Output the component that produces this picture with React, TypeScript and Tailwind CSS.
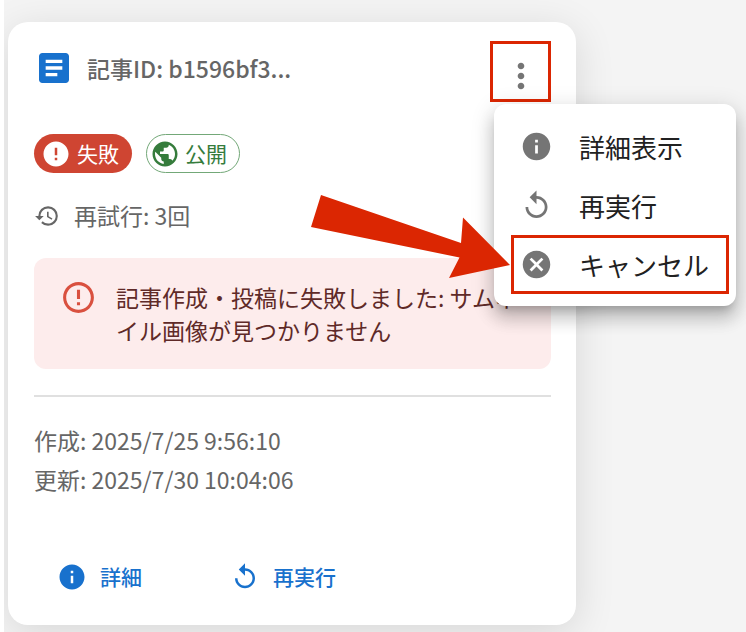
import { useState } from 'react'
import type { ReactNode } from 'react'
import {
  MdArticle,
  MdCancel,
  MdError,
  MdErrorOutline,
  MdHistory,
  MdInfo,
  MdMoreVert,
  MdPublic,
  MdReplay,
} from 'react-icons/md'

const article = {
  id: 'b1596bf3...',
  retries: 3,
  error: '記事作成・投稿に失敗しました: サムネイル画像が見つかりません',
  created: '2025/7/25 9:56:10',
  updated: '2025/7/30 10:04:06',
}

const menuItems = [
  { label: '詳細表示', icon: <MdInfo size={33} />, marked: false },
  { label: '再実行', icon: <MdReplay size={33} />, marked: false },
  { label: 'キャンセル', icon: <MdCancel size={33} />, marked: true },
]

function PointerArrow() {
  return (
    <svg
      className="pointer-events-none absolute right-full -top-[41px] text-[#db2602]"
      width="200"
      height="85"
      viewBox="0 0 200 85"
      fill="currentColor"
      aria-hidden="true"
    >
      <path d="M10 1 150 49 152 23.5 199 71 138 84 148.5 63.5 0 33Z" />
    </svg>
  )
}

function ActionMenu() {
  return (
    <ul
      role="menu"
      className="absolute top-[63px] left-1 z-10 w-[242px] rounded-xl bg-white pt-[13px] pr-[7px] pb-3 pl-[17px] shadow-[0_8px_8px_-5px_rgba(0,0,0,0.2),0_13px_16px_2px_rgba(0,0,0,0.14),0_5px_22px_3px_rgba(0,0,0,0.12)]"
    >
      {menuItems.map(item => (
        <li key={item.label} role="none" className="relative">
          <button
            role="menuitem"
            className={`flex h-[59px] w-full items-center gap-[26px] border-3 pl-[6px] text-[26px] text-[#212121] ${
              item.marked ? 'border-[#db2602]' : 'border-transparent'
            }`}
          >
            <span className="text-[#757575]">{item.icon}</span>
            <span className="whitespace-nowrap">{item.label}</span>
          </button>
          {item.marked && <PointerArrow />}
        </li>
      ))}
    </ul>
  )
}

function CardButton({ icon, children }: { icon: ReactNode; children: ReactNode }) {
  return (
    <button className="flex h-[50px] items-center gap-[13px] px-[23px] text-[21px] font-medium text-[#1871cd]">
      {icon}
      {children}
    </button>
  )
}

export default function App() {
  const [open, setOpen] = useState(true)

  return (
    <div className="min-h-screen bg-white pl-1 font-['Noto_Sans_CJK_JP',sans-serif]">
      <main className="min-h-screen overflow-hidden bg-[#f4f4f4] pt-[22px] pb-[7px] pl-1">
        <article className="w-full max-w-[568px] rounded-[20px] bg-white pt-[19px] pr-[25px] pb-[23px] pl-[26px] shadow-[0_8px_40px_rgba(0,0,0,0.12)]">
          <header className="flex items-start justify-between">
            <div className="flex h-[54px] items-center gap-[13px] text-[23px] font-medium text-[#666]">
              <MdArticle size={40} className="text-[#1871cd]" />
              <h2>記事ID: {article.id}</h2>
            </div>
            <div className="relative">
              <button
                aria-label="メニュー"
                aria-expanded={open}
                onClick={() => setOpen(o => !o)}
                className="flex size-[61px] items-center justify-center border-3 border-[#db2602] pt-2 text-[#757575]"
              >
                <MdMoreVert size={40} />
              </button>
              {open && <ActionMenu />}
            </div>
          </header>

          <div className="mt-8 flex gap-[14px] text-[21px]">
            <span className="flex h-[39px] items-center gap-[6px] rounded-full bg-[#cf4532] pr-[13px] pl-[7px] text-white">
              <MdError size={30} />
              失敗
            </span>
            <span className="flex h-[39px] items-center gap-[5px] rounded-full border border-[#73a878] pr-3 pl-[3px] text-[#357c3c]">
              <MdPublic size={30} />
              公開
            </span>
          </div>

          <p className="mt-[26px] flex items-center gap-[14px] text-[23px] leading-[33px] text-[#666]">
            <MdHistory size={26} />
            再試行: {article.retries}回
          </p>

          <div
            role="alert"
            className="mt-[26px] flex items-start gap-[19px] rounded-xl bg-[#fdecec] px-[26px] py-[21px] text-[23px] leading-[33px] text-[#5f2a28]"
          >
            <MdErrorOutline size={37} className="shrink-0 text-[#d9503f]" />
            <p className="pt-[2px] pb-px">{article.error}</p>
          </div>

          <hr className="mt-[26px] border-t-2 border-[#e0e0e0]" />

          <div className="mt-6 text-[23px] leading-[39px] text-[#666]">
            <p>作成: {article.created}</p>
            <p>更新: {article.updated}</p>
          </div>

          <footer className="mt-[53px] flex gap-[42px]">
            <CardButton icon={<MdInfo size={30} />}>詳細</CardButton>
            <CardButton icon={<MdReplay size={30} />}>再実行</CardButton>
          </footer>
        </article>
      </main>
    </div>
  )
}
